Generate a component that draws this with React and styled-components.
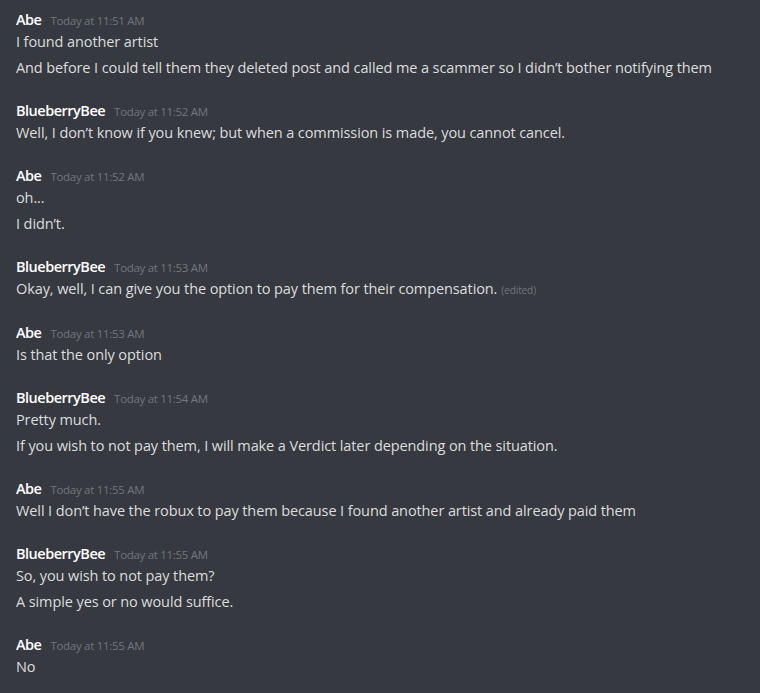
import styled, { createGlobalStyle } from 'styled-components';

const Global = createGlobalStyle`
  html, body {
    margin: 0;
    padding: 0;
    background: #36393f;
  }
`;

const Chat = styled.div`
  display: flex;
  flex-flow: column;
  gap: 21px;
  padding: 9px 16px;
  font-family: "Open Sans", "Noto Sans", sans-serif;
  background: #36393f;
  min-height: 693px;
  box-sizing: border-box;
`;

const Group = styled.div`
  display: flex;
  flex-flow: column;
`;

const Header = styled.div`
  display: flex;
  align-items: baseline;
  height: 22px;
  line-height: 22px;
`;

const Name = styled.span`
  color: #ffffff;
  font-weight: 600;
  font-size: 14.5px;
  margin-right: 9px;
  letter-spacing: -0.5px;
`;

const Time = styled.span`
  color: #72767d;
  font-size: 11.5px;
  letter-spacing: -0.3px;
`;

const Line = styled.div`
  color: #dcddde;
  font-size: 14.5px;
  line-height: 22px;
  margin-top: ${(p) => (p.$first ? '0' : '4px')};
  letter-spacing: -0.1px;
`;

const Edited = styled.span`
  color: #72767d;
  font-size: 10px;
  margin-left: 4px;
`;

const messages = [
  { name: 'Abe', time: '11:51 AM', lines: ['I found another artist', 'And before I could tell them they deleted post and called me a scammer so I didn\u2019t bother notifying them'] },
  { name: 'BlueberryBee', time: '11:52 AM', lines: ['Well, I don\u2019t know if you knew; but when a commission is made, you cannot cancel.'] },
  { name: 'Abe', time: '11:52 AM', lines: ['oh...', 'I didn\u2019t.'] },
  { name: 'BlueberryBee', time: '11:53 AM', lines: ['Okay, well, I can give you the option to pay them for their compensation.'], edited: true },
  { name: 'Abe', time: '11:53 AM', lines: ['Is that the only option'] },
  { name: 'BlueberryBee', time: '11:54 AM', lines: ['Pretty much.', 'If you wish to not pay them, I will make a Verdict later depending on the situation.'] },
  { name: 'Abe', time: '11:55 AM', lines: ['Well I don\u2019t have the robux to pay them because I found another artist and already paid them'] },
  { name: 'BlueberryBee', time: '11:55 AM', lines: ['So, you wish to not pay them?', 'A simple yes or no would suffice.'] },
  { name: 'Abe', time: '11:55 AM', lines: ['No'] },
];

export default function App() {
  return (
    <>
      <Global />
      <Chat>
        {messages.map((m, i) => (
          <Group key={i}>
            <Header>
              <Name>{m.name}</Name>
              <Time>Today at {m.time}</Time>
            </Header>
            {m.lines.map((l, j) => (
              <Line key={j} $first={j === 0}>
                {l}
                {m.edited && j === m.lines.length - 1 && <Edited>(edited)</Edited>}
              </Line>
            ))}
          </Group>
        ))}
      </Chat>
    </>
  );
}
